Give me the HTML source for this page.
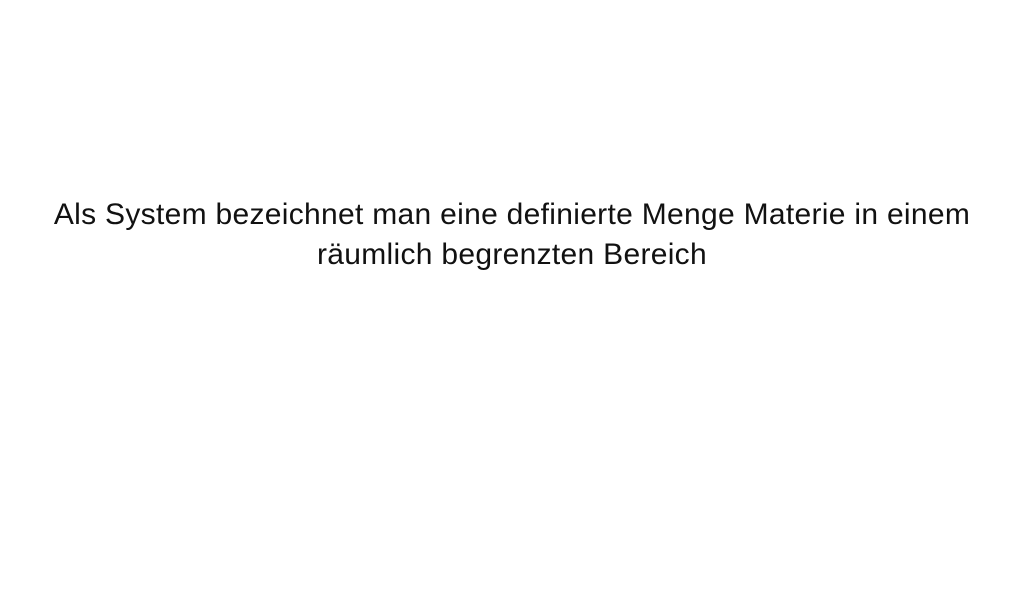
<!DOCTYPE html>
<html><head><meta charset="utf-8"><style>
html,body{margin:0;padding:0;background:#fff;width:1024px;height:598px;overflow:hidden}
.t{position:absolute;left:0;top:195px;width:1024px;text-align:center;font-family:"Liberation Sans","DejaVu Sans",sans-serif;font-size:30px;line-height:40px;color:#111;letter-spacing:0.3px}
</style></head><body>
<div class="t">Als System bezeichnet man eine definierte Menge Materie in einem<br>räumlich begrenzten Bereich</div>
</body></html>
